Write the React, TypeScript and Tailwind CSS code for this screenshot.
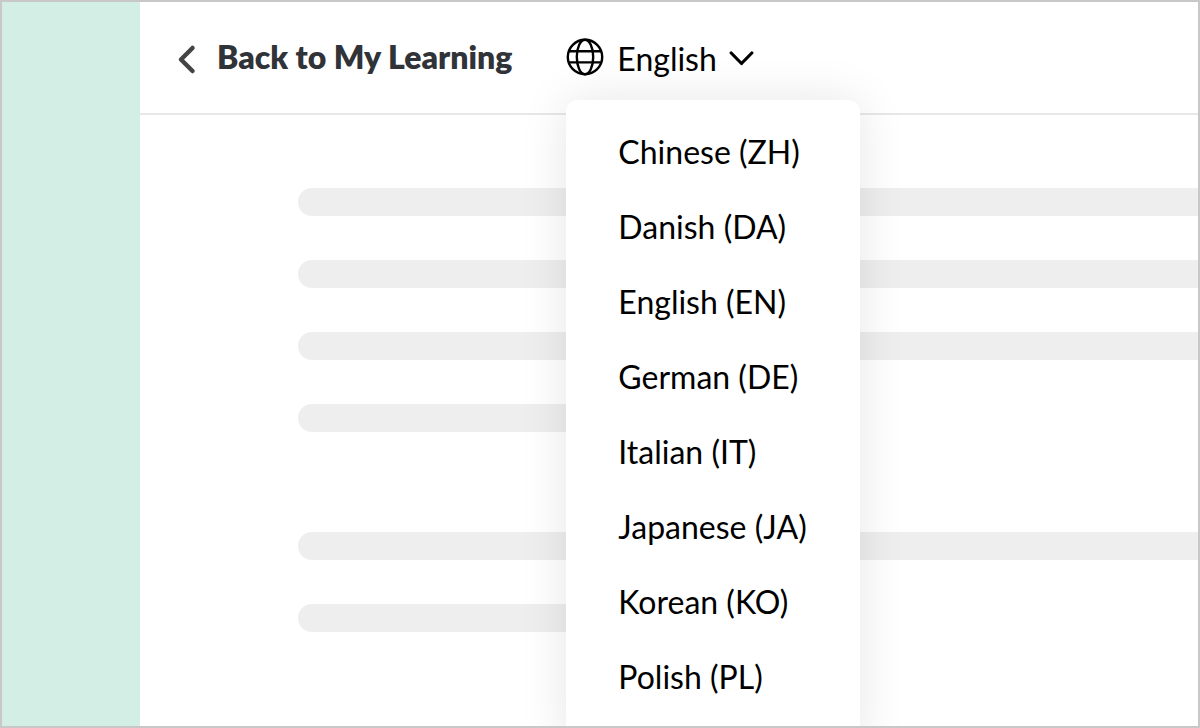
import React, { useState } from 'react';

interface Language {
  code: string;
  name: string;
}

const languages: Language[] = [
  { code: 'ZH', name: 'Chinese' },
  { code: 'DA', name: 'Danish' },
  { code: 'EN', name: 'English' },
  { code: 'DE', name: 'German' },
  { code: 'IT', name: 'Italian' },
  { code: 'JA', name: 'Japanese' },
  { code: 'KO', name: 'Korean' },
  { code: 'PL', name: 'Polish' }
];

const GlobeIcon = () => (
  <svg className="w-[38px] h-[38px]" viewBox="0 0 38 38" fill="none" stroke="currentColor" strokeWidth="2.4" aria-hidden="true">
    <circle cx="19" cy="19" r="17.2" />
    <ellipse cx="19" cy="19" rx="8.2" ry="17.2" />
    <path d="M3 13.2h32M3 24.4h32" />
  </svg>
);

const LanguageMenu = () => {
  const [open, setOpen] = useState(true);
  const [selected, setSelected] = useState('EN');

  const current = languages.find((language) => language.code === selected);

  const handleSelect = (code: string) => {
    setSelected(code);
    setOpen(false);
  };

  return (
    <div className="relative">
      <button
        type="button"
        aria-haspopup="menu"
        aria-expanded={open}
        onClick={() => setOpen(!open)}
        className="flex items-center text-black"
      >
        <GlobeIcon />
        <span className="ml-[13px] pt-1">{current?.name}</span>
        <svg className="ml-3 w-7 h-5" viewBox="0 0 28 20" fill="none" stroke="currentColor" strokeWidth="3.2" strokeLinecap="round" strokeLinejoin="round" aria-hidden="true">
          <path d="M2.2 6 12.5 16.5 22.8 6" />
        </svg>
      </button>

      {/* Language options */}
      {open && (
        <ul
          role="menu"
          className="absolute left-0 top-full mt-[21px] w-[294px] pt-[15px] pb-8 rounded-xl bg-white shadow-[0_0_48px_rgba(0,0,0,0.1)] z-10"
        >
          {languages.map((language) => (
            <li key={language.code} role="none">
              <button
                type="button"
                role="menuitem"
                onClick={() => handleSelect(language.code)}
                className="w-full h-[75px] pl-[52px] text-left text-black"
              >
                {language.name} ({language.code})
              </button>
            </li>
          ))}
        </ul>
      )}
    </div>
  );
};

// Placeholder for a line of lesson text
const Line = ({ short = false }: { short?: boolean }) => (
  <div className={`h-7 bg-[#eeeeee] ${short ? 'w-1/2 rounded-full' : 'rounded-l-full'}`} />
);

const App: React.FC = () => {
  return (
    <div className="flex h-screen overflow-hidden border-2 border-[#c8c8c8] bg-white font-['Lato',sans-serif] text-[32px] leading-10">
      <aside className="w-[138px] shrink-0 bg-[#d3eee4]" />

      <div className="flex-1 min-w-0">
        <header className="flex items-center h-[113px] pl-9 pb-0.5 border-b-2 border-[#e8e8e8]">
          <a href="#my-learning" className="flex items-center font-extrabold text-[#303338]">
            <svg className="mt-1 w-5 h-8 text-[#444444]" viewBox="0 0 20 32" fill="none" stroke="currentColor" strokeWidth="4.5" strokeLinecap="round" strokeLinejoin="round" aria-hidden="true">
              <path d="M16.5 5 5 16.5 16.5 28" />
            </svg>
            <span className="ml-[21px]">Back to My Learning</span>
          </a>
          <div className="ml-[54px]">
            <LanguageMenu />
          </div>
        </header>

        <main className="flex flex-col gap-11 pt-[73px] pl-[158px]">
          <Line />
          <Line />
          <Line />
          <Line short />
          <div className="flex flex-col gap-11 pt-14">
            <Line />
            <Line short />
          </div>
        </main>
      </div>
    </div>
  );
};

export default App;
